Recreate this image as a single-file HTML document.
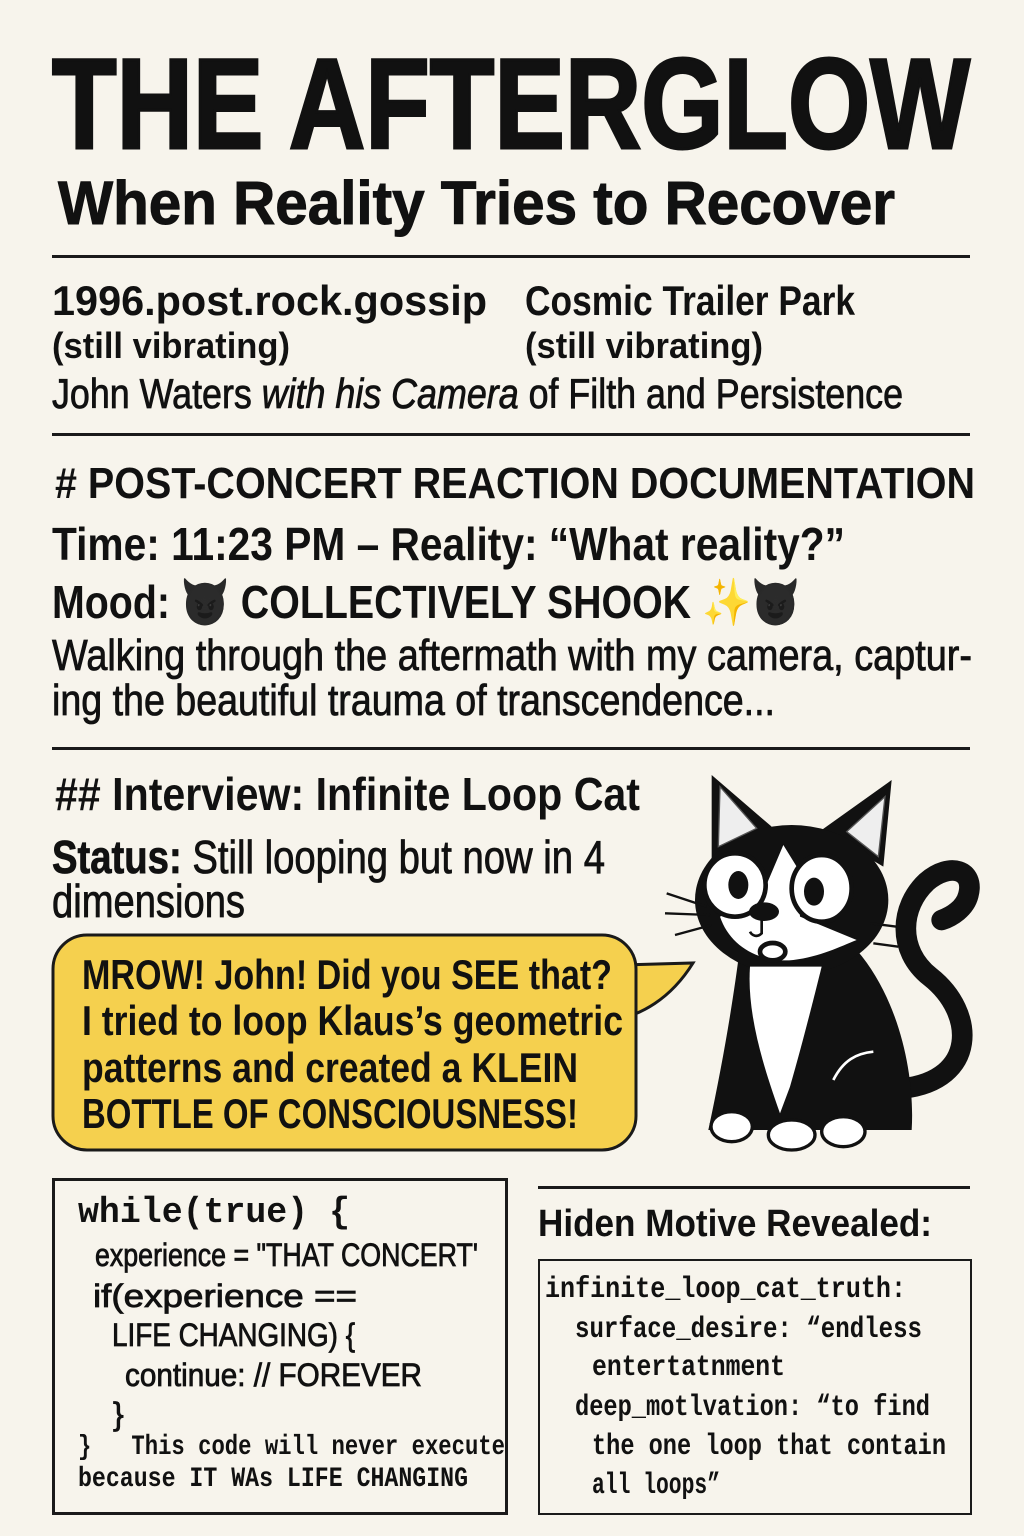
<!DOCTYPE html>
<html><head><meta charset="utf-8"><style>
html,body{margin:0;padding:0;}
body{width:1024px;height:1536px;background:#f7f4ec;position:relative;overflow:hidden;color:#111;font-family:"Liberation Sans",sans-serif;}
.t{position:absolute;white-space:nowrap;line-height:1;transform-origin:0 0;}
.b{font-weight:bold;}
.m{font-family:"Liberation Mono",monospace;}
.s1{-webkit-text-stroke:1px #111;}
.s2{-webkit-text-stroke:3px #111;}
.c{-webkit-text-stroke:0.8px #111;}
.e{filter:grayscale(1) brightness(0.6);}
.rule{position:absolute;height:3px;background:#1a1a1a;}
.box{position:absolute;border:3px solid #1a1a1a;box-sizing:border-box;}
</style></head><body>
<div class="t b s2" style="left:52px;top:41px;font-size:128px" w="918">THE AFTERGLOW</div>
<div class="t b s1" style="left:58px;top:173px;font-size:61px" w="837">When Reality Tries to Recover</div>
<div class="rule" style="left:52px;top:255px;width:918px"></div>
<div class="t b" style="left:52px;top:280px;font-size:42px" w="435">1996.post.rock.gossip</div>
<div class="t" style="left:525px;top:280px;font-size:42px;font-weight:600" w="330">Cosmic Trailer Park</div>
<div class="t b" style="left:52px;top:328px;font-size:36px" w="238">(still vibrating)</div>
<div class="t b" style="left:525px;top:328px;font-size:36px" w="238">(still vibrating)</div>
<div class="t c" style="left:52px;top:373px;font-size:42px" w="851">John Waters <i>with his Camera</i> of Filth and Persistence</div>
<div class="rule" style="left:52px;top:433px;width:918px"></div>
<div class="t b" style="left:55px;top:462px;font-size:44px" w="920"># POST-CONCERT REACTION DOCUMENTATION</div>
<div class="t b" style="left:52px;top:521px;font-size:46px" w="793">Time: 11:23 PM – Reality: “What reality?”</div>
<div class="t b" style="left:52px;top:579px;font-size:46px" w="748">Mood: <span class="e">😈</span> COLLECTIVELY SHOOK ✨<span class="e">😈</span></div>
<div class="t c" style="left:52px;top:634px;font-size:44px" w="920">Walking through the aftermath with my camera, captur-</div>
<div class="t c" style="left:52px;top:679px;font-size:44px" w="723">ing the beautiful trauma of transcendence...</div>
<div class="rule" style="left:52px;top:747px;width:918px"></div>
<div class="t b" style="left:55px;top:771px;font-size:46px" w="585">## Interview: Infinite Loop Cat</div>
<div class="t c" style="left:52px;top:834px;font-size:46px" w="553"><b>Status:</b> Still looping but now in 4</div>
<div class="t c" style="left:52px;top:878px;font-size:46px" w="193">dimensions</div>

<svg style="position:absolute;left:0;top:0" width="1024" height="1536">
<path d="M620,965 L693,963 C670,1000 640,1015 615,1020 Z" fill="#f5d04e" stroke="#1a1a1a" stroke-width="3"/>
<rect x="53" y="935" width="583" height="215" rx="34" fill="#f5d04e" stroke="#1a1a1a" stroke-width="3"/>
<path d="M620,968 L634,968 L634,1012 L618,1016 Z" fill="#f5d04e"/>
</svg>
<div class="t b" style="left:82px;top:954px;font-size:42px" w="530">MROW! John! Did you SEE that?</div>
<div class="t b" style="left:82px;top:1000px;font-size:42px" w="541">I tried to loop Klaus’s geometric</div>
<div class="t b" style="left:82px;top:1047px;font-size:42px" w="496">patterns and created a KLEIN</div>
<div class="t b" style="left:82px;top:1093px;font-size:42px" w="496">BOTTLE OF CONSCIOUSNESS!</div>

<svg style="position:absolute;left:640px;top:760px" width="384" height="400" viewBox="0 0 1152 1200">
<g fill="#111" stroke="#111">
<path d="M790,985 C1010,960 1010,760 870,650 C770,570 780,440 860,365 C930,305 1005,330 985,405 C975,445 935,470 905,480" fill="none" stroke-width="62" stroke-linecap="round"/>
<path d="M300,560 C280,720 250,900 205,1110 L815,1110 C825,950 780,720 650,570 Z" stroke="none"/>
<path d="M215,300 L215,45 L395,200 Z M545,210 L755,60 L730,320 Z" stroke="none"/>
<ellipse cx="455" cy="420" rx="290" ry="225" stroke="none"/>
</g>
<path d="M235,260 L240,80 L350,205 Z M620,215 L735,110 L715,290 Z" fill="#eee" stroke="#555" stroke-width="4"/>
<path d="M330,620 C320,760 370,920 420,1060 L450,980 C490,840 520,720 545,620 Z" fill="#fff"/>
<path d="M430,255 L360,420 L240,470 C270,560 360,610 460,600 C540,590 600,560 650,540 L480,470 L470,320 Z" fill="#fff"/>
<ellipse cx="285" cy="375" rx="92" ry="95" fill="#fff" stroke="#111" stroke-width="14"/>
<ellipse cx="295" cy="375" rx="30" ry="42" fill="#111"/>
<ellipse cx="545" cy="385" rx="90" ry="100" fill="#fff" stroke="#111" stroke-width="14"/>
<ellipse cx="522" cy="395" rx="30" ry="42" fill="#111"/>
<ellipse cx="372" cy="455" rx="45" ry="28" fill="#111"/>
<path d="M365,480 L365,520 C350,535 335,525 330,515" fill="none" stroke="#111" stroke-width="8"/>
<ellipse cx="398" cy="575" rx="38" ry="26" fill="#fff" stroke="#111" stroke-width="14"/>
<g stroke="#111" stroke-width="7" fill="none">
<path d="M80,400 L200,440 M75,460 L210,465 M105,525 L215,495 M690,490 L770,500 M700,550 L775,560"/>
</g>
<g fill="#fff" stroke="#111" stroke-width="10">
<ellipse cx="275" cy="1100" rx="62" ry="45"/>
<ellipse cx="455" cy="1125" rx="70" ry="45"/>
<ellipse cx="610" cy="1115" rx="65" ry="45"/>
</g>
<path d="M580,960 C610,900 650,880 700,875" fill="none" stroke="#fff" stroke-width="8"/>
</svg>

<div class="box" style="left:52px;top:1178px;width:456px;height:337px"></div>
<div class="t m b" style="left:78px;top:1195px;font-size:36px" w="272">while(true) {</div>
<div class="t c" style="left:95px;top:1239px;font-size:32px" w="383">experience = "THAT CONCERT'</div>
<div class="t c" style="left:93px;top:1280px;font-size:32px" w="264">if(experience ==</div>
<div class="t c" style="left:112px;top:1319px;font-size:32px" w="243">LIFE CHANGING) {</div>
<div class="t c" style="left:125px;top:1359px;font-size:32px" w="297">continue: // FOREVER</div>
<div class="t c" style="left:113px;top:1398px;font-size:32px">}</div>
<div class="t m b" style="left:78px;top:1434px;font-size:28px" w="427">}&nbsp;&nbsp;&nbsp;This code will never execute</div>
<div class="t m b" style="left:78px;top:1466px;font-size:28px" w="390">because IT WAs LIFE CHANGING</div>

<div class="rule" style="left:538px;top:1186px;width:432px"></div>
<div class="t b" style="left:538px;top:1205px;font-size:38px" w="394">Hiden Motive Revealed:</div>
<div class="box" style="left:538px;top:1259px;width:434px;height:256px;border-width:2px"></div>
<div class="t m b" style="left:545px;top:1275px;font-size:30px" w="361">infinite_loop_cat_truth:</div>
<div class="t m b" style="left:575px;top:1315px;font-size:30px" w="347">surface_desire: “endless</div>
<div class="t m b" style="left:592px;top:1353px;font-size:30px" w="193">entertatnment</div>
<div class="t m b" style="left:575px;top:1393px;font-size:30px" w="355">deep_motlvation: “to find</div>
<div class="t m b" style="left:592px;top:1432px;font-size:30px" w="354">the one loop that contain</div>
<div class="t m b" style="left:592px;top:1471px;font-size:30px" w="128">all loops”</div>
<script>
document.querySelectorAll('[w]').forEach(function(e){var w=+e.getAttribute('w');var c=e.getBoundingClientRect().width;if(c>0)e.style.transform='scaleX('+(w/c)+')';});
</script>
</body></html>
